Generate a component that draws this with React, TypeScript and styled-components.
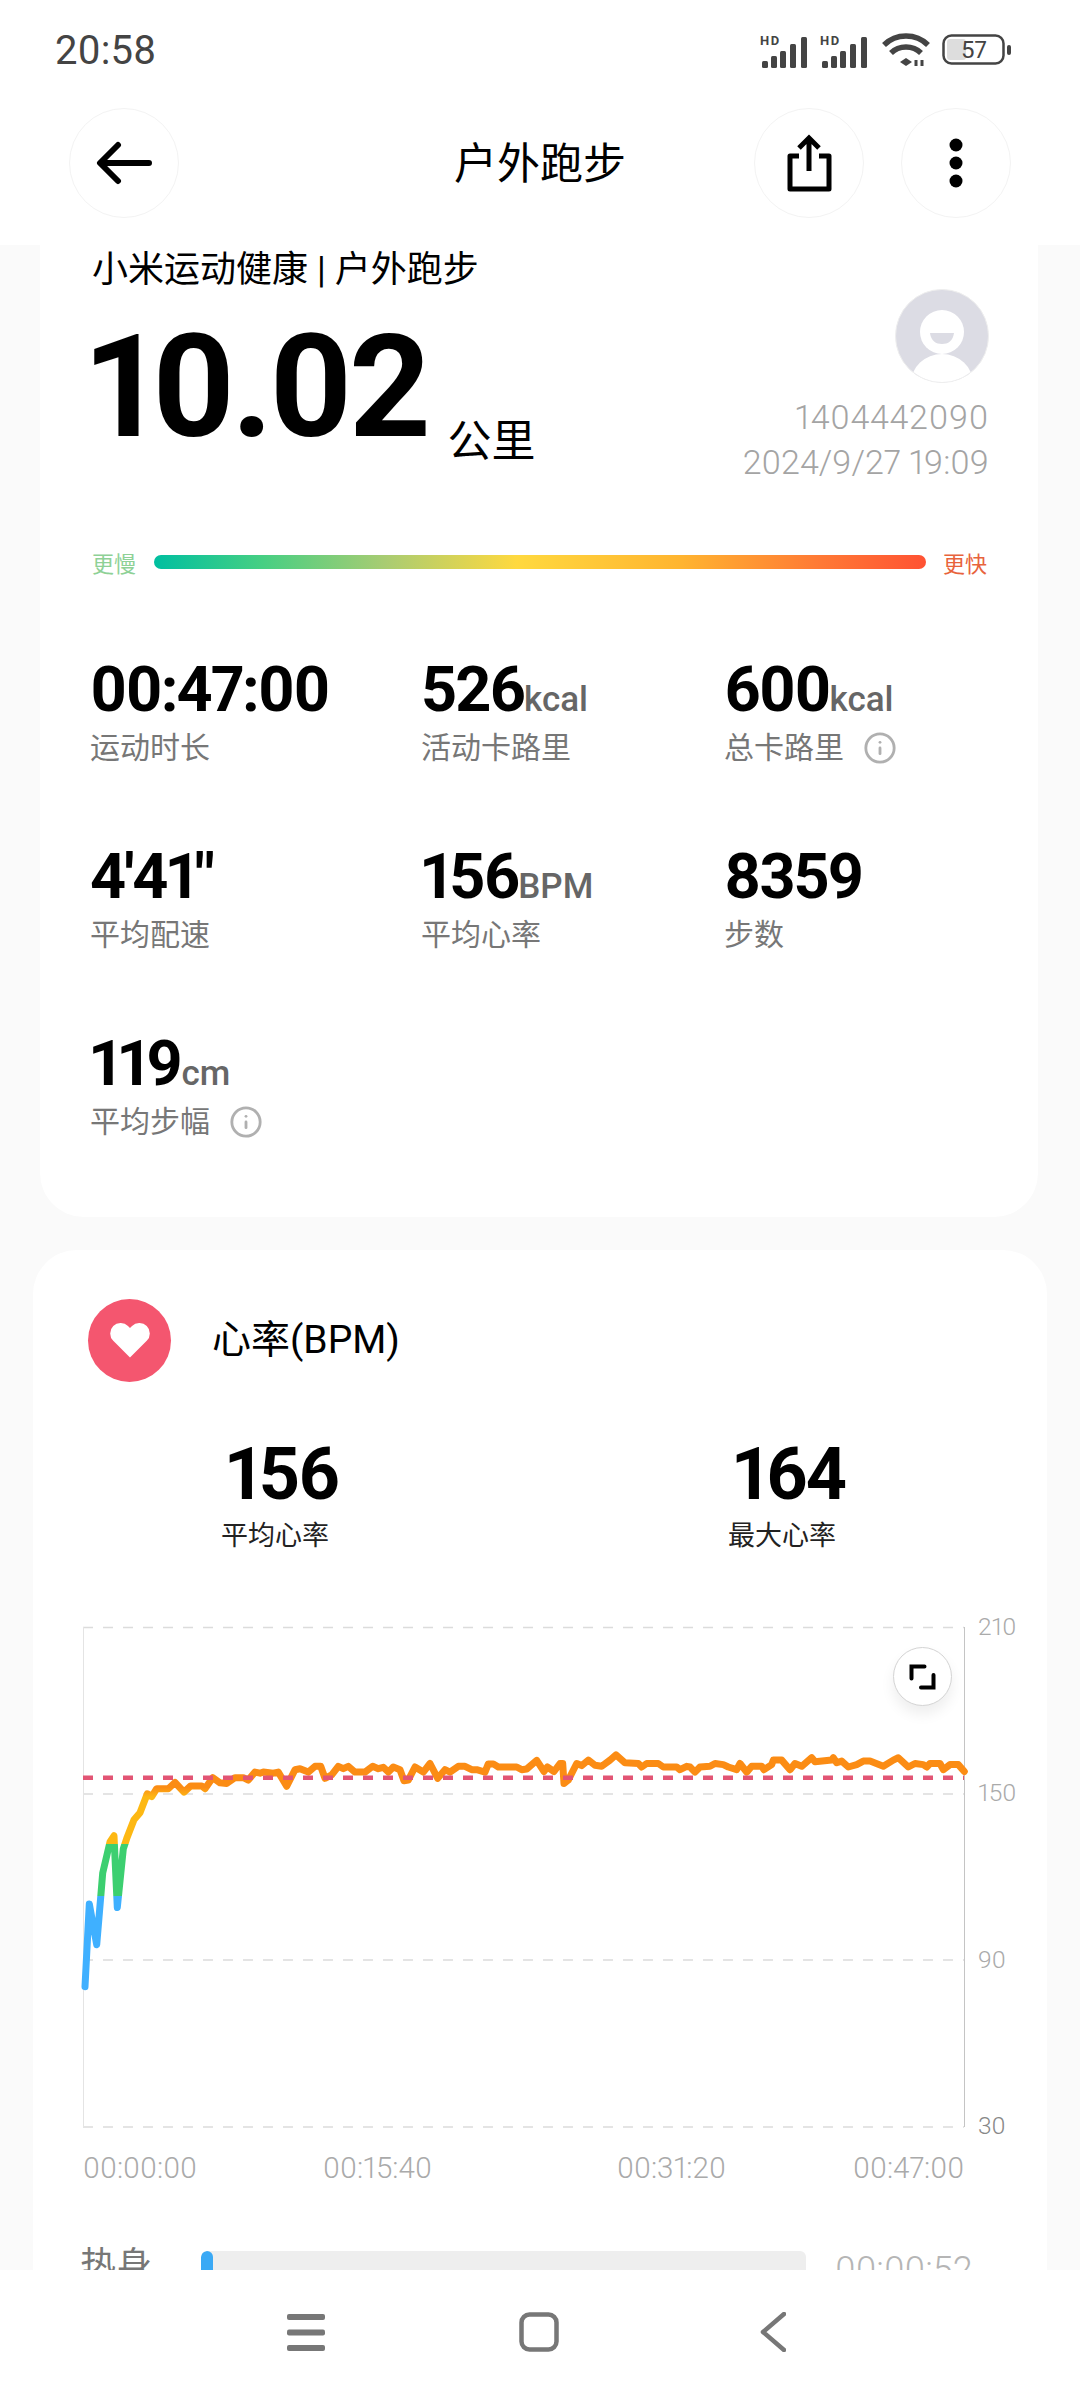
import React from 'react';
import styled, { createGlobalStyle } from 'styled-components';
import { Info } from 'lucide-react';

const GlobalStyle = createGlobalStyle`
	html, body {
		margin: 0;
		padding: 0;
		background: #fff;
	}
	* {
		box-sizing: border-box;
	}
`;

const SANS = `Roboto, "Noto Sans CJK SC", sans-serif`;

const Screen = styled.div`
	width: 1080px;
	height: 2400px;
	display: flex;
	flex-direction: column;
	overflow: hidden;
	background: #fff;
	font-family: ${SANS};
	font-variant-numeric: proportional-nums;
	color: #000;
`;

const StatusBar = styled.div`
	height: 100px;
	flex: none;
	padding: 0 68px 0 55px;
	display: flex;
	align-items: center;
	justify-content: space-between;
`;

const Clock = styled.span`
	font-size: 40px;
	color: #444;
`;

const StatusIcons = styled.div`
	display: flex;
	align-items: center;
	gap: 10px;
`;

const WifiSlot = styled.div`
	display: flex;
	margin: 0 2px;
`;

const Header = styled.header`
	height: 145px;
	flex: none;
	padding: 8px 69px 27px 69px;
	display: grid;
	grid-template-columns: 1fr auto 1fr;
	align-items: center;
`;

const HeaderActions = styled.div`
	display: flex;
	justify-content: flex-end;
	gap: 37px;
`;

const RoundButton = styled.button`
	width: 110px;
	height: 110px;
	padding: 0;
	border-radius: 50%;
	border: 1px solid #f3f3f3;
	background: #fff;
	display: flex;
	align-items: center;
	justify-content: center;
`;

const PageTitle = styled.h1`
	margin: -6px 0 0;
	font-size: 43px;
	font-weight: 400;
	text-align: center;
`;

const Feed = styled.main`
	flex: 1;
	min-height: 0;
	overflow: hidden;
	background: #fafafa;
`;

const SummaryCard = styled.section`
	height: 972px;
	margin: 0 42px 33px 40px;
	padding: 0 49px 0 52px;
	background: #fff;
	border-radius: 0 0 44px 44px;
`;

const Source = styled.div`
	font-size: 36px;
	line-height: 50px;
`;

const Hero = styled.div`
	height: 213px;
	display: flex;
	justify-content: space-between;
`;

const Distance = styled.div`
	display: flex;
	align-items: flex-start;
`;

const DistanceValue = styled.span`
	margin: 21px 0 0 -5px;
	font-size: 143px;
	line-height: 143px;
	font-weight: 700;
	letter-spacing: -4.5px;
`;

const DistanceUnit = styled.span`
	margin: 122px 0 0 21px;
	font-size: 44px;
	line-height: 50px;
`;

const Owner = styled.div`
	margin-top: -7px;
	display: flex;
	flex-direction: column;
	align-items: flex-end;
	color: #a4a4a4;
	font-size: 34px;
	line-height: 45px;
	font-weight: 300;
`;

const Avatar = styled.svg`
	display: block;
	margin-bottom: 11px;
`;

const OwnerId = styled.span`
	letter-spacing: 0.7px;
`;

const PaceRow = styled.div`
	height: 44px;
	margin-top: 32px;
	display: flex;
	align-items: center;
`;

const PaceLabel = styled.span<{ $color: string; $width: number }>`
	flex: none;
	width: ${(p) => p.$width}px;
	font-size: 22px;
	color: ${(p) => p.$color};
`;

const PaceBar = styled.div`
	flex: none;
	width: 772px;
	height: 14px;
	margin-right: 17px;
	border-radius: 7px;
	background: linear-gradient(
		90deg,
		#00bfa0 0%,
		#46cf83 14%,
		#a9cc72 30%,
		#ffd93f 47%,
		#ffb530 68%,
		#ff7a35 86%,
		#ff5233 100%
	);
`;

const StatGrid = styled.div`
	margin: 71px 0 0 -2px;
	display: grid;
	grid-template-columns: 331px 303px 1fr;
	grid-auto-rows: 187px;
`;

const StatValue = styled.div`
	height: 70px;
	font-size: 63px;
	line-height: 70px;
	font-weight: 700;
	letter-spacing: -2px;
	white-space: nowrap;
`;

const StatUnit = styled.span`
	font-size: 35px;
	line-height: 0;
	font-weight: 500;
	letter-spacing: 0;
	color: #666;
`;

const StatLabel = styled.div`
	margin-top: 3px;
	display: flex;
	align-items: center;
	gap: 19px;
	font-size: 30px;
	line-height: 40px;
	color: #777;
	white-space: nowrap;
`;

const HeartRateCard = styled.section`
	height: 1100px;
	margin: 0 33px;
	padding-top: 49px;
	background: #fff;
	border-radius: 44px 44px 0 0;
`;

const CardHeading = styled.div`
	padding-left: 55px;
	display: flex;
	align-items: center;
	gap: 41px;
`;

const HeartBadge = styled.div`
	width: 83px;
	height: 83px;
	border-radius: 50%;
	background: #f4566f;
	display: flex;
	align-items: center;
	justify-content: center;
`;

const CardTitle = styled.h2`
	margin: 0 0 9px;
	font-size: 39px;
	font-weight: 400;
`;

const Averages = styled.div`
	margin-top: 51px;
	display: grid;
	grid-template-columns: 484px 530px;
`;

const Average = styled.div`
	text-align: center;
`;

const AverageValue = styled.div`
	padding-left: 14px;
	font-size: 72px;
	line-height: 84px;
	font-weight: 700;
	letter-spacing: -2px;
`;

const AverageLabel = styled.div`
	font-size: 27px;
	line-height: 38px;
	color: #222;
`;

const Chart = styled.div`
	position: relative;
	width: 990px;
	height: 590px;
	margin: 46px 0 0 27px;
`;

const ChartCanvas = styled.svg`
	display: block;
`;

const AxisText = styled.text<{ $size: number; $dark?: boolean }>`
	font-family: ${SANS};
	font-weight: 300;
	font-size: ${(p) => p.$size}px;
	font-variant-numeric: proportional-nums;
	fill: ${(p) => (p.$dark ? '#888' : '#aaa')};
`;

const ExpandButton = styled.button`
	position: absolute;
	left: 833px;
	top: 46px;
	width: 59px;
	height: 59px;
	padding: 0;
	border: 1px solid #d4d4d4;
	border-radius: 50%;
	background: #fff;
	box-shadow: 0 8px 14px rgba(0, 0, 0, 0.07);
`;

const ZoneRow = styled.div`
	height: 60px;
	margin-top: 60px;
	padding-left: 47px;
	display: flex;
	align-items: flex-start;
`;

const ZoneName = styled.span`
	width: 121px;
	margin-top: -9px;
	font-size: 36px;
	line-height: 48px;
	color: #777;
`;

const ZoneTrack = styled.div`
	width: 605px;
	height: 34px;
	border-radius: 6px;
	overflow: hidden;
	background: #eee;
`;

const ZoneFill = styled.div`
	height: 100%;
	border-radius: 6px;
	background: #3aa9f5;
`;

const ZoneTime = styled.span`
	margin: -5px 0 0 29px;
	font-size: 36px;
	line-height: 48px;
	font-weight: 300;
	color: #b5b5b5;
`;

const NavBar = styled.nav`
	height: 130px;
	flex: none;
	background: #fff;
	display: grid;
	grid-template-columns: 287px 38px 194px 40px 201px 26px;
	padding-top: 42px;
`;

const NavIcon = styled.svg`
	display: block;
`;

const NavSlot = styled.div<{ $col: number }>`
	grid-column: ${(p) => p.$col};
`;

// heart rate trace, x in thirds of a pixel and y in 2.904ths from the chart's corner
const TRACE_START: number[][] = [
	[75, 1120], [88, 880], [110, 998], [122, 860], [128, 790], [150, 700], [162, 682], [172, 890],
	[190, 720], [200, 690], [222, 635], [240, 615], [262, 560], [275, 568], [290, 545], [325, 545],
	[345, 527], [372, 555], [392, 537], [425, 537], [435, 545], [458, 513], [480, 528], [500, 530],
	[525, 513], [550, 513], [565, 520], [585, 497], [600, 500], [610, 497], [640, 500], [655, 497],
	[680, 538], [705, 490], [720, 487], [745, 497], [765, 480], [782, 480], [795, 515], [815, 505],
	[835, 480], [850, 487], [865, 480], [885, 497], [915, 497], [938, 480], [955, 487], [970, 483],
	[985, 497], [1000, 482], [1020, 490], [1032, 522], [1045, 520], [1065, 482], [1090, 497],
	[1110, 472], [1133, 515], [1155, 490], [1170, 497], [1195, 480], [1215, 480], [1235, 490],
	[1250, 490], [1275, 497], [1285, 473], [1300, 473], [1315, 482], [1370, 482], [1385, 490],
	[1400, 488], [1430, 463],
];

const TRACE_END: number[][] = [
	[12, 495], [22, 482], [42, 495], [60, 472], [68, 472], [72, 530], [85, 520], [110, 472],
	[125, 478], [145, 462], [165, 477], [185, 480], [210, 462], [228, 447], [255, 470], [295, 472],
	[305, 482], [320, 472], [355, 472], [370, 482], [410, 482], [420, 490], [440, 480], [450, 482],
	[465, 497], [480, 482], [510, 480], [525, 472], [550, 475], [565, 482], [590, 490], [600, 472],
	[620, 497], [635, 480], [665, 480], [672, 490], [695, 475], [700, 462], [725, 462], [750, 490],
	[765, 472], [785, 480], [815, 455], [825, 467], [875, 462], [880, 455], [890, 470], [905, 465],
	[925, 482], [950, 475], [970, 465], [990, 465], [1030, 480], [1060, 462], [1075, 455],
	[1105, 482], [1125, 472], [1150, 475], [1160, 482], [1170, 472], [1200, 472], [1210, 490],
	[1230, 475], [1255, 475], [1273, 495],
];

const tracePoints = [...TRACE_START, ...TRACE_END.map(([x, y]) => [x + 1440, y])]
	.map(([x, y]) => `${(x / 3).toFixed(1)},${(y / 2.904).toFixed(1)}`)
	.join(' ');

const GRID_LINES = [26.5, 193, 359, 526];

const Y_TICKS = [
	{ y: 34, label: '210' },
	{ y: 200, label: '150' },
	{ y: 367, label: '90' },
	{ y: 533, label: '30', dark: true },
];

const X_TICKS = [
	{ x: 23, label: '00:00:00' },
	{ x: 263, label: '00:15:40' },
	{ x: 557, label: '00:31:20' },
	{ x: 793, label: '00:47:00' },
];

const STATS = [
	{ value: '00:47:00', label: '运动时长' },
	{ value: '526', unit: 'kcal', label: '活动卡路里' },
	{ value: '600', unit: 'kcal', label: '总卡路里', info: true },
	{ value: `4'41"`, label: '平均配速' },
	{ value: '156', unit: 'BPM', label: '平均心率' },
	{ value: '8359', label: '步数' },
	{ value: '119', unit: 'cm', label: '平均步幅', info: true },
];

const Signal = () => (
	<svg width="50" height="36" viewBox="0 -4 50 36">
		<text x="0" y="9" fontFamily="Roboto, sans-serif" fontSize="13" fontWeight="700" letterSpacing="1.5" fill="#444">
			HD
		</text>
		<g fill="#444">
			<rect x="2" y="25" width="6" height="7" rx="1.5" />
			<rect x="11" y="20" width="6" height="12" rx="1.5" />
			<rect x="20" y="15" width="6" height="17" rx="1.5" />
			<rect x="30" y="8" width="6" height="24" rx="1.5" />
			<rect x="41" y="1" width="6" height="31" rx="1.5" />
		</g>
	</svg>
);

const Wifi = () => (
	<svg width="48" height="34" viewBox="0 0 48 34" fill="none">
		<g stroke="#444" strokeWidth="5.5">
			<path d="M2 12 C14 0 34 0 46 12" />
			<path d="M9 20 C17 12 31 12 39 20" />
		</g>
		<path d="M18 29 L24 25 L30 29 L24 33 Z" fill="#444" />
		<path d="M34 27 V33 M40 33 V27" stroke="#444" strokeWidth="3" />
	</svg>
);

const Battery = () => (
	<svg width="70" height="32" viewBox="0 0 70 32">
		<rect x="1.5" y="1.5" width="60" height="28" rx="8" fill="none" stroke="#444" strokeWidth="2.5" />
		<rect x="5" y="5" width="19" height="21" rx="3" fill="#ddd" />
		<rect x="65" y="11" width="4" height="10" rx="2" fill="#444" />
		<text x="32" y="24" textAnchor="middle" fontFamily="Roboto, sans-serif" fontSize="24" fill="#444">
			57
		</text>
	</svg>
);

const App = () => {
	return (
		<Screen>
			<GlobalStyle />
			<StatusBar>
				<Clock>20:58</Clock>
				<StatusIcons>
					<Signal />
					<Signal />
					<WifiSlot>
						<Wifi />
					</WifiSlot>
					<Battery />
				</StatusIcons>
			</StatusBar>

			<Header>
				<RoundButton>
					<svg width="60" height="44" viewBox="0 0 60 44" fill="none" stroke="#000" strokeWidth="6" strokeLinecap="round" strokeLinejoin="round">
						<path d="M55 22 H7 M24 4 L6 22 L24 40" />
					</svg>
				</RoundButton>
				<PageTitle>户外跑步</PageTitle>
				<HeaderActions>
					<RoundButton>
						<svg width="50" height="58" viewBox="0 0 50 58" fill="none" stroke="#000" strokeWidth="5">
							<path d="M15 22 H6 V55 H45 V22 H35" strokeLinejoin="round" />
							<path d="M25 37 V5 M15 14 L25 4 L35 14" />
						</svg>
					</RoundButton>
					<RoundButton>
						<svg width="14" height="50" viewBox="0 0 14 50" fill="#000">
							<circle cx="7" cy="7" r="6.5" />
							<circle cx="7" cy="25" r="6.5" />
							<circle cx="7" cy="43" r="6.5" />
						</svg>
					</RoundButton>
				</HeaderActions>
			</Header>

			<Feed>
				<SummaryCard>
					<Source>小米运动健康 | 户外跑步</Source>
					<Hero>
						<Distance>
							<DistanceValue>10.02</DistanceValue>
							<DistanceUnit>公里</DistanceUnit>
						</Distance>
						<Owner>
							<Avatar width="94" height="96" viewBox="0 0 94 96">
								<defs>
									<clipPath id="avatar-clip">
										<circle cx="47" cy="48" r="46" />
									</clipPath>
								</defs>
								<circle cx="47" cy="48" r="46.5" fill="#dcdce4" stroke="#eee" />
								<g clipPath="url(#avatar-clip)">
									<circle cx="47" cy="44" r="22" fill="#fff" />
									<path d="M35 45 H59 C58 53 53 56 47 56 C41 56 36 53 35 45 Z" fill="#dcdce4" />
									<ellipse cx="47" cy="95" rx="31" ry="29" fill="#fff" />
								</g>
							</Avatar>
							<OwnerId>1404442090</OwnerId>
							<span>2024/9/27 19:09</span>
						</Owner>
					</Hero>
					<PaceRow>
						<PaceLabel $color="#8ed196" $width={62}>更慢</PaceLabel>
						<PaceBar />
						<PaceLabel $color="#e8633c" $width={44}>更快</PaceLabel>
					</PaceRow>
					<StatGrid>
						{STATS.map((stat) => (
							<div key={stat.label}>
								<StatValue>
									{stat.value}
									{stat.unit && <StatUnit>{stat.unit}</StatUnit>}
								</StatValue>
								<StatLabel>
									{stat.label}
									{stat.info && <Info size={34} color="#b0b0b0" strokeWidth={2} />}
								</StatLabel>
							</div>
						))}
					</StatGrid>
				</SummaryCard>

				<HeartRateCard>
					<CardHeading>
						<HeartBadge>
							<svg width="40" height="36" viewBox="2 3 20 19" fill="#fff">
								<path d="M20.84 4.61a5.5 5.5 0 0 0-7.78 0L12 5.67l-1.06-1.06a5.5 5.5 0 0 0-7.78 7.78l1.06 1.06L12 21.23l7.78-7.78 1.06-1.06a5.5 5.5 0 0 0 0-7.78z" />
							</svg>
						</HeartBadge>
						<CardTitle>心率(BPM)</CardTitle>
					</CardHeading>
					<Averages>
						<Average>
							<AverageValue>156</AverageValue>
							<AverageLabel>平均心率</AverageLabel>
						</Average>
						<Average>
							<AverageValue>164</AverageValue>
							<AverageLabel>最大心率</AverageLabel>
						</Average>
					</Averages>

					<Chart>
						<ChartCanvas width="990" height="590" viewBox="0 0 990 590">
							<defs>
								{/* zone colours switch at fixed heart rates */}
								<linearGradient id="hr-zones" gradientUnits="userSpaceOnUse" x1="0" y1="160" x2="0" y2="400">
									<stop offset="0" stopColor="#fb8c14" />
									<stop offset="0.11" stopColor="#fb8c14" />
									<stop offset="0.15" stopColor="#fdb813" />
									<stop offset="0.346" stopColor="#fdb813" />
									<stop offset="0.346" stopColor="#3ccf70" />
									<stop offset="0.562" stopColor="#3ccf70" />
									<stop offset="0.562" stopColor="#3fb0ff" />
									<stop offset="1" stopColor="#3fb0ff" />
								</linearGradient>
							</defs>
							{GRID_LINES.map((y) => (
								<line key={y} x1="23" x2="904" y1={y} y2={y} stroke="#dcdcdc" strokeWidth="1.5" strokeDasharray="10 10" />
							))}
							<line x1="23.5" x2="23.5" y1="26" y2="526" stroke="#e4e4e4" strokeWidth="1" />
							<line x1="904.5" x2="904.5" y1="26" y2="526" stroke="#c4c4c4" strokeWidth="1" />
							<polyline points={tracePoints} fill="none" stroke="url(#hr-zones)" strokeWidth="7" strokeLinejoin="round" strokeLinecap="round" />
							<line x1="23" x2="904" y1="176.7" y2="176.7" stroke="#e25574" strokeWidth="4.5" strokeDasharray="10 10" />
							{Y_TICKS.map((tick) => (
								<AxisText key={tick.label} x="918" y={tick.y} $size={24.5} $dark={tick.dark}>
									{tick.label}
								</AxisText>
							))}
							{X_TICKS.map((tick) => (
								<AxisText key={tick.label} x={tick.x} y="577" $size={29.5}>
									{tick.label}
								</AxisText>
							))}
						</ChartCanvas>
						<ExpandButton>
							<svg width="57" height="57" viewBox="1 1 57 57" fill="none" stroke="#000" strokeWidth="4" strokeLinecap="round">
								<path d="M31.5 19.5 H18.5 V31.5 M28 40.5 H40.5 V28" />
							</svg>
						</ExpandButton>
					</Chart>

					<ZoneRow>
						<ZoneName>热身</ZoneName>
						<ZoneTrack>
							<ZoneFill style={{ width: `${(52 / 2820) * 100 * 1.1}%` }} />
						</ZoneTrack>
						<ZoneTime>00:00:52</ZoneTime>
					</ZoneRow>
				</HeartRateCard>
			</Feed>

			<NavBar>
				<NavSlot $col={2}>
					<NavIcon width="38" height="40" viewBox="0 0 38 40" fill="#777">
						<rect y="2" width="38" height="6" rx="2" />
						<rect y="17.5" width="38" height="6" rx="2" />
						<rect y="33" width="38" height="6" rx="2" />
					</NavIcon>
				</NavSlot>
				<NavSlot $col={4}>
					<NavIcon width="40" height="40" viewBox="0 0 40 40" fill="none" stroke="#777" strokeWidth="4.5">
						<rect x="2.5" y="2.5" width="35" height="35" rx="8" />
					</NavIcon>
				</NavSlot>
				<NavSlot $col={6}>
					<NavIcon width="26" height="40" viewBox="0 0 26 40" fill="none" stroke="#777" strokeWidth="4.5" strokeLinecap="round" strokeLinejoin="round">
						<path d="M24 2 L3 20 L24 38" />
					</NavIcon>
				</NavSlot>
			</NavBar>
		</Screen>
	);
};

export default App;
